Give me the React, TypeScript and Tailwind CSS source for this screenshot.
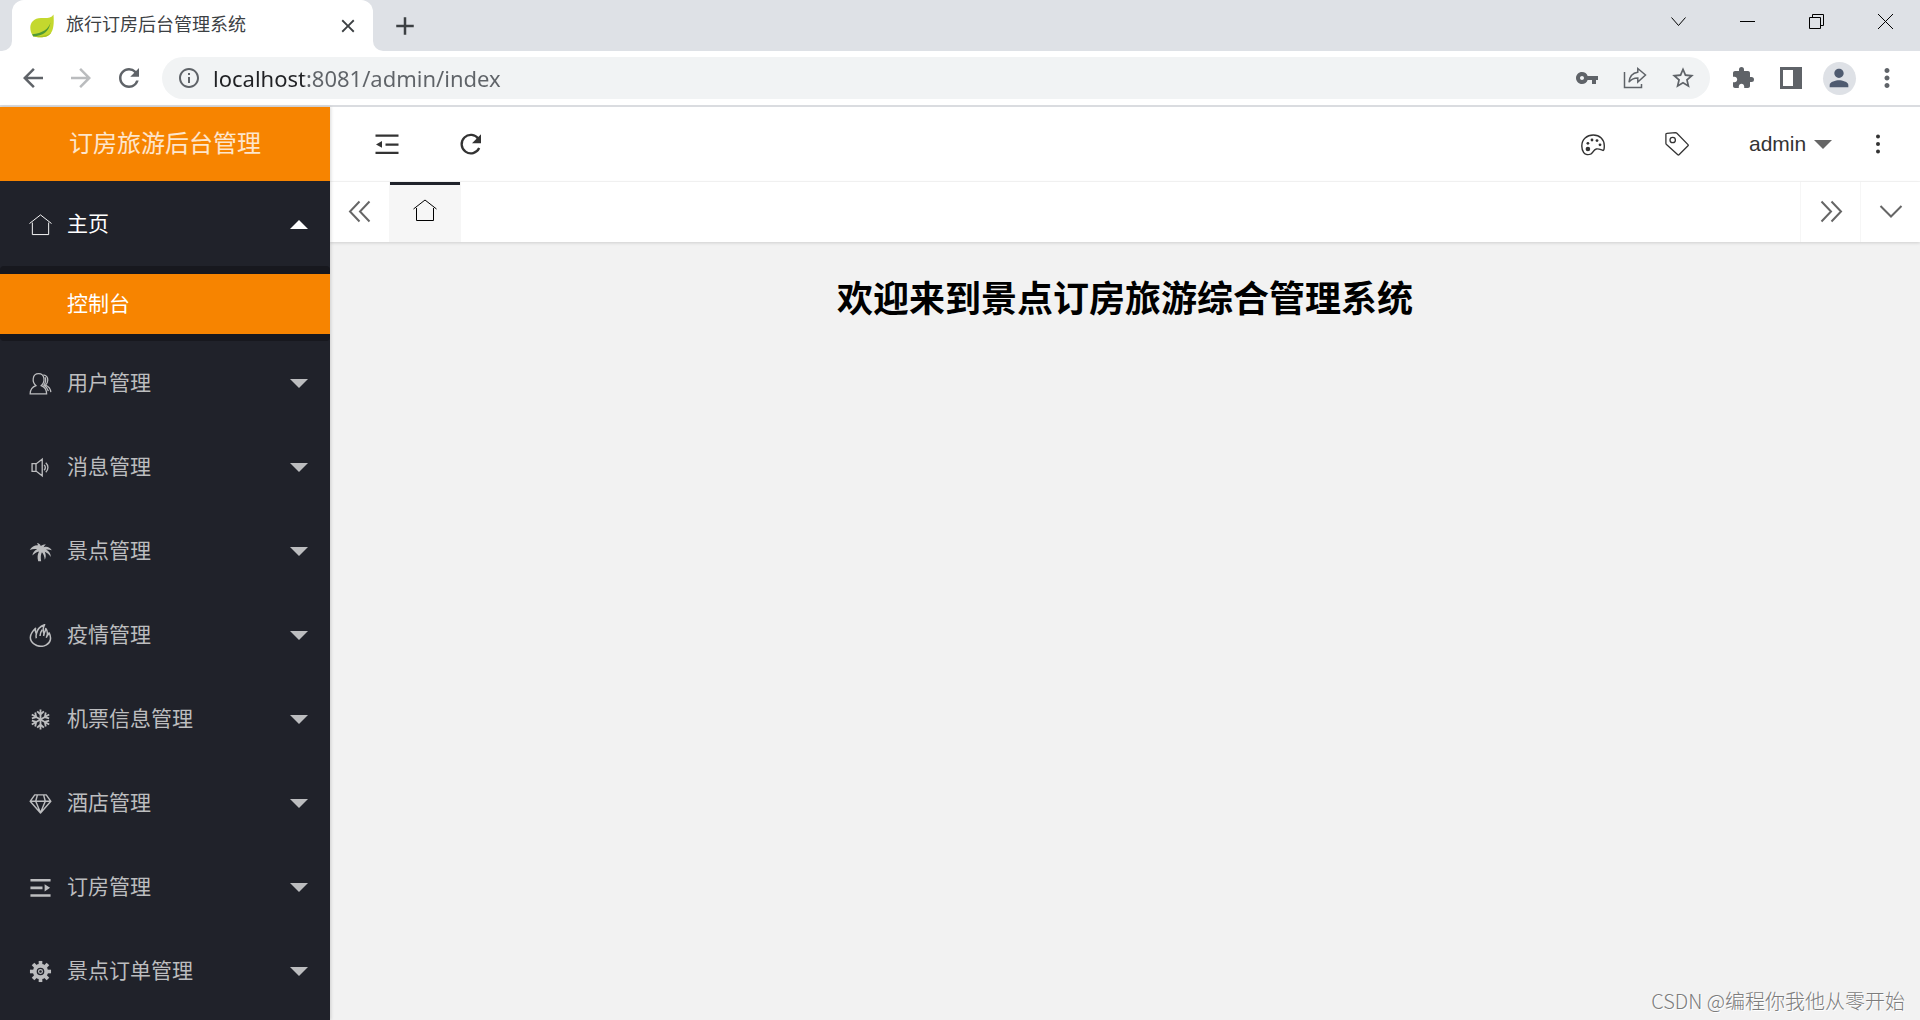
import React from 'react'
import {
  MdAdd,
  MdArrowBack,
  MdArrowForward,
  MdClose,
  MdExtension,
  MdInfoOutline,
  MdMoreVert,
  MdPerson,
  MdRefresh,
  MdStarBorder,
  MdVpnKey
} from 'react-icons/md'

type IconProps = { className?: string }

function HomeIcon({ className }: IconProps) {
  return (
    <svg viewBox="0 0 24 24" className={className} fill="none" stroke="currentColor">
      <path d="M.5 11 12 2l11.500 9M3.500 10v12.500h17V10" />
    </svg>
  )
}

function UserIcon({ className }: IconProps) {
  return (
    <svg viewBox="0 0 24 24" className={className} fill="none" stroke="currentColor" strokeWidth="1.300">
      <path d="M7.300 14.300c-2.100-2-3.300-4.300-2.900-7.300.4-3.200 2.700-5.200 5.600-5.200s5.200 2 5.600 5.200c.4 3-.8 5.300-2.900 7.300 3.800 1.400 5.600 4 5.700 8.500H1.200c.1-4.500 2.100-7.100 6.100-8.500Z" />
      <path d="M15 3c3 .5 4.700 2.700 4.600 5.700-.1 2-.9 3.500-2.300 4.900 3.400 1.600 5.200 3.900 5.500 7.400M16.800 5.500c1.200 3 .7 5.700-1.300 8.200 2.500 1.500 4 3.500 4.700 6.300" />
    </svg>
  )
}

function SpeakerIcon({ className }: IconProps) {
  return (
    <svg viewBox="0 0 24 24" className={className} fill="none" stroke="currentColor" strokeWidth="1.400">
      <path d="M3.200 8h4.500l6.100-4.700v17.400L7.700 16H3.200V8Zm4.100 0v8M15.800 9.300c1.500 1.700 1.500 3.900 0 5.500M17.500 7c3 2.800 3 7.200 0 10" />
    </svg>
  )
}

function PalmIcon({ className }: IconProps) {
  return (
    <svg viewBox="0 0 24 24" className={className} fill="currentColor">
      <path d="M12.300 6.300C11.800 4.600 10.300 3.400 8.200 3.200c.7.800 1 1.500 1.100 2.300C6 5.300 2.500 7 .8 10.500c2.500-1 5.200-1.200 7.700-.8-2.700 1.300-4.500 3.600-5 6.600 1.900-2.300 4.400-3.700 7-4.300-1.700 3-2 6-.9 10.200h3.100c-.8-4-.4-7 .8-9.300 1.700 2 2.700 4.700 2.900 7.800 1.500-2.200 1.400-5.300.1-8.400 2.500 1 4.600 2.900 6.200 5.500.1-3.200-1.500-6.200-4.900-7.800 2.100-.2 4 .1 6 .8-1.900-3.300-5.200-4.400-8.500-3.300.4-1.200 1.200-2.200 2.500-2.900-2.500-.1-4.600.5-5.500 1.700Z" />
    </svg>
  )
}

function FireIcon({ className }: IconProps) {
  return (
    <svg viewBox="0 0 24 24" className={className} fill="none" stroke="currentColor" strokeWidth="1.600" strokeLinejoin="round">
      <path d="M5.500 21C-.8 16.500.7 10.500 6.800 4.500 6.300 7 6.700 8.500 7.700 10.300 8.500 5.500 11 2.500 16.300.7c-2 3.300-2 6-.6 9.300.8-1.500 1.500-3 1.800-5.200 1.800 2 2 4.200 1.500 7.200 1-.6 1.500-1.500 2-2.700C23.700 14.500 22.700 19.500 17.700 22c-3.700 1.800-8.700 1.500-12.200-1Z" />
      <path d="M7.700 10.300c-.5 1.600-.6 2.900-.1 4.500M11.500 12.500c.2-2.600.9-4.700 2.300-6.500M15.700 10l-.5 2.500M19 12l-1 2.300" />
    </svg>
  )
}

function SnowIcon({ className }: IconProps) {
  return (
    <svg viewBox="0 0 24 24" className={className} fill="none" stroke="currentColor" strokeWidth="1.900">
      {[0, 60, 120, 180, 240, 300].map((angle) => (
        <path key={angle} d="M12 12V1.500M8.500 3.600l3.500 3.200 3.500-3.200" transform={`rotate(${angle} 12 12)`} />
      ))}
    </svg>
  )
}

function DiamondIcon({ className }: IconProps) {
  return (
    <svg viewBox="0 0 24 24" className={className} fill="none" stroke="currentColor" strokeWidth="1.500" strokeLinejoin="round">
      <path d="M6 3h12l4.800 6.700L12 22 1.200 9.700 6 3ZM1.200 9.700h21.600M8.700 3.200 7 9.700l5 12 5-12-1.700-6.500" />
    </svg>
  )
}

function SpreadIcon({ className }: IconProps) {
  return (
    <svg viewBox="0 0 24 24" className={className} fill="currentColor">
      <path d="M1.500 3h21v2.700h-21zM1.500 11h12.600v2.700H1.500zM1.500 19h21v2.700h-21zM16.300 8.500l5.700 3.800-5.700 3.800z" />
    </svg>
  )
}

function ShrinkIcon({ className }: IconProps) {
  return (
    <svg viewBox="0 0 24 24" className={className} fill="currentColor">
      <path d="M.5 2.500h23v2.300H.5zM10.500 11.500h13v2.200h-13zM.5 19.700h23V22H.5zM7 9v6.800L1 12.400z" />
    </svg>
  )
}

function GearIcon({ className }: IconProps) {
  return (
    <svg viewBox="0 0 24 24" className={className} fill="none" stroke="currentColor">
      <circle cx="12" cy="12" r="6" strokeWidth="4" />
      <circle cx="12" cy="12" r="2" strokeWidth="1.200" />
      {[0, 45, 90, 135, 180, 225, 270, 315].map((angle) => (
        <path key={angle} d="M12 5.500V1" strokeWidth="3.800" transform={`rotate(${angle} 12 12)`} />
      ))}
    </svg>
  )
}

function PaletteIcon({ className }: IconProps) {
  return (
    <svg viewBox="0 0 24 24" className={className} fill="none" stroke="currentColor" strokeWidth="1.400">
      <path d="M.8 14C.8 7.500 5.800 3 12.300 3S23.300 7.700 23.300 13.700c0 3.700-.5 4.900-1.500 4.700-2.200-.8-4.300-1.900-6.500-1.400-3.200.8-2.400 3.100-5.200 4.800-2.500 1.200-5.900 1-7.400-1.100C1.300 18.700.8 16.900.8 14Z" />
      <g fill="currentColor" stroke="none">
        <circle cx="6.900" cy="17" r="2.300" />
        <circle cx="6.900" cy="11.300" r="1.400" />
        <circle cx="11" cy="8" r="1.400" />
        <circle cx="16" cy="8.600" r="1.400" />
        <circle cx="19" cy="12.800" r="1.400" />
      </g>
    </svg>
  )
}

function TagIcon({ className }: IconProps) {
  return (
    <svg viewBox="0 0 24 24" className={className} fill="none" stroke="currentColor" strokeWidth="1.300" strokeLinejoin="round">
      <path d="M1.700 1.400 10.500.7c.6 0 1 .1 1.400.5L23 12.600c.4.400.4.800 0 1.200l-9 9c-.4.400-.8.400-1.200 0L1.500 12.500c-.4-.4-.6-.8-.6-1.300V2.200c0-.5.300-.8.800-.8Z" />
      <circle cx="7.700" cy="8" r="2.700" />
    </svg>
  )
}

function ReloadIcon({ className }: IconProps) {
  return (
    <svg viewBox="0 0 24 24" className={className} fill="none" stroke="currentColor" strokeWidth="2.300">
      <path d="M19.500 7a9.200 9.200 0 1 0 .7 9" />
      <path d="M22 2.200v9h-9z" fill="currentColor" stroke="none" />
    </svg>
  )
}

function ShareIcon({ className }: IconProps) {
  return (
    <svg viewBox="0 0 24 24" className={className} fill="none" stroke="currentColor" strokeWidth="1.500">
      <path d="M1.500 6v15.500h17V18" />
      <path d="M14.800 2.500 22.500 9l-7.700 7v-4c-4 0-6.800 1.200-8.800 4.200.5-5.500 3.800-9.300 8.800-10V2.500Z" />
    </svg>
  )
}

function SidePanelIcon({ className }: IconProps) {
  return (
    <svg viewBox="0 0 24 24" className={className} fill="currentColor" fillRule="evenodd">
      <path d="M1 1h22v22H1V1Zm3 3v16h10V4H4Z" />
    </svg>
  )
}

function DoubleChevron({ className }: IconProps) {
  return (
    <svg viewBox="0 0 24 24" className={className} fill="none" stroke="currentColor" strokeWidth="2">
      <path d="M11.500 1.500 2 11.500l9.500 10M21.500 1.500 12 11.500l9.500 10" />
    </svg>
  )
}

function LeafIcon({ className }: IconProps) {
  return (
    <svg viewBox="0 0 24 24" className={className}>
      <path d="M23.500.5C21 4.500 17 4 11 4 4 4 .3 8.500.3 13.500c0 3 .9 6 2.700 8.500 3.500 1.600 10 1.800 14 .2 6.500-2.700 7.300-11.200 6.500-21.700Z" fill="#c4d82e" />
      <path d="M3 22c3.500 1.600 10 1.800 14 .2 1.800-.8 3.200-2 4.200-3.600-4 3.400-11 3.900-18.200 3.400Z" fill="#a9c223" />
      <path d="M20.500 8.500C18.500 15.500 12.500 19 2.200 20.300l1 2.100C13 22 19 17.500 20.500 8.500Z" fill="#4f9a35" />
    </svg>
  )
}

const menuItems = [
  { icon: UserIcon, title: '用户管理' },
  { icon: SpeakerIcon, title: '消息管理' },
  { icon: PalmIcon, title: '景点管理' },
  { icon: FireIcon, title: '疫情管理' },
  { icon: SnowIcon, title: '机票信息管理' },
  { icon: DiamondIcon, title: '酒店管理' },
  { icon: SpreadIcon, title: '订房管理' },
  { icon: GearIcon, title: '景点订单管理' }
]

const toolbarButton = 'flex h-12 w-12 shrink-0 items-center justify-center'
const windowButton = 'flex h-[43px] w-[69px] items-center justify-center'
const headerButton = 'flex h-full w-[84px] items-center justify-center'
const menuButton = 'flex h-[84px] w-full items-center pl-[29px] pr-[22px] text-left'

function TabStrip() {
  return (
    <div className="flex h-[51px] bg-white">
      <div className="w-3 rounded-br-[10px] bg-[#dee1e6]" />
      <div className="bg-[#dee1e6]">
        <div className="flex h-full w-[361px] items-center rounded-t-[12px] bg-white pl-[18px] pr-[14px]">
          <LeafIcon className="h-6 w-6" />
          <span className="ml-3 flex-1 text-[18px] text-[#3c4043]">旅行订房后台管理系统</span>
          <button aria-label="关闭标签页" className="text-[#3c4043]">
            <MdClose size={22} />
          </button>
        </div>
      </div>
      <div className="flex flex-1 rounded-bl-[10px] bg-[#dee1e6]">
        <button aria-label="新标签页" className="ml-[17px] text-[#3c4043]">
          <MdAdd size={30} />
        </button>
        <div className="ml-auto flex text-black">
          <button aria-label="搜索标签页" className={windowButton}>
            <svg viewBox="0 0 15 15" className="h-[15px] w-[15px]" fill="none" stroke="currentColor"><path d="m.5 3.500 7 8 7-8" /></svg>
          </button>
          <button aria-label="最小化" className={windowButton}>
            <svg viewBox="0 0 15 15" className="h-[15px] w-[15px]" fill="none" stroke="currentColor"><path d="M0 7.500h15" /></svg>
          </button>
          <button aria-label="还原" className={windowButton}>
            <svg viewBox="0 0 15 15" className="h-[15px] w-[15px]" fill="none" stroke="currentColor"><path d="M.5 3.500h11v11H.5zM3.500 3.500v-3h11v11h-3" /></svg>
          </button>
          <button aria-label="关闭" className={windowButton}>
            <svg viewBox="0 0 15 15" className="h-[15px] w-[15px]" fill="none" stroke="currentColor"><path d="m0 0 15 15M15 0 0 15" /></svg>
          </button>
        </div>
      </div>
    </div>
  )
}

function Toolbar() {
  return (
    <div className="flex h-14 items-center border-b-2 border-[#dadce0] bg-white px-[9px] text-[#5f6368]">
      <button aria-label="后退" className={toolbarButton}><MdArrowBack size={30} /></button>
      <button aria-label="前进" className={`${toolbarButton} text-[#babcbe]`}><MdArrowForward size={30} /></button>
      <button aria-label="重新加载" className={toolbarButton}><MdRefresh size={30} /></button>
      <div className="mx-[9px] flex h-[42px] flex-1 items-center rounded-full bg-[#f1f3f4] px-[3px]">
        <button aria-label="网站信息" className={toolbarButton}><MdInfoOutline size={24} /></button>
        <input
          aria-label="地址"
          defaultValue="localhost:8081/admin/index"
          className="h-full min-w-0 flex-1 bg-[linear-gradient(to_right,#202124_91px,#5f6368_91px)] bg-clip-text font-['Noto_Sans',sans-serif] text-[22px] text-transparent caret-black outline-none"
        />
        <button aria-label="密码" className={toolbarButton}><MdVpnKey size={24} /></button>
        <button aria-label="分享" className={toolbarButton}><ShareIcon className="h-6 w-6" /></button>
        <button aria-label="收藏" className={toolbarButton}><MdStarBorder size={26} /></button>
      </div>
      <button aria-label="扩展程序" className={toolbarButton}><MdExtension size={24} /></button>
      <button aria-label="侧边栏" className={toolbarButton}><SidePanelIcon className="h-6 w-6" /></button>
      <button aria-label="用户" className={toolbarButton}>
        <span className="flex h-[33px] w-[33px] items-center justify-center rounded-full bg-[#dee1e6] text-[#4f5b70]">
          <MdPerson size={28} />
        </span>
      </button>
      <button aria-label="更多" className={toolbarButton}><MdMoreVert size={30} /></button>
    </div>
  )
}

function Sidebar() {
  return (
    <aside className="z-10 w-[330px] shrink-0 bg-[#20222a] shadow-[1px_0_3px_rgba(0,0,0,0.15)]">
      <div className="flex h-[74px] items-center justify-center bg-[#f78400] text-[24px] text-white/80">
        订房旅游后台管理
      </div>
      <nav className="pt-px text-[21px]">
        <button className={`${menuButton} text-white`}>
          <HomeIcon className="h-[23px] w-[23px]" />
          <span className="ml-[15px] flex-1">主页</span>
          <span className="border-x-[9px] border-b-[9px] border-x-transparent border-b-white" />
        </button>
        <div className="rounded-sm bg-[#17181e] pb-[7px] pt-2">
          <a href="#console" className="flex h-[60px] items-center bg-[#f78400] pl-[67px] text-white">控制台</a>
        </div>
        {menuItems.map((item) => {
          const Icon = item.icon
          return (
            <button key={item.title} className={`${menuButton} text-[#bcbdbf]`}>
              <Icon className="h-[23px] w-[23px]" />
              <span className="ml-[15px] flex-1">{item.title}</span>
              <span className="border-x-[9px] border-t-[9px] border-x-transparent border-t-[#bcbdbf]" />
            </button>
          )
        })}
      </nav>
    </aside>
  )
}

export default function App() {
  return (
    <div className="flex min-h-screen flex-col font-['Liberation_Sans','Noto_Sans_CJK_SC',sans-serif]">
      <TabStrip />
      <Toolbar />
      <div className="flex flex-1">
        <Sidebar />
        <div className="flex flex-1 flex-col bg-[#f2f2f2]">
          <header className="flex h-[75px] items-center border-b border-[#f6f6f6] bg-white pl-[15px] text-[#333]">
            <button aria-label="侧边伸缩" className={headerButton}><ShrinkIcon className="h-6 w-6" /></button>
            <button aria-label="刷新" className={headerButton}><ReloadIcon className="h-6 w-6" /></button>
            <button aria-label="主题" className={`${headerButton} ml-auto`}><PaletteIcon className="h-6 w-6" /></button>
            <button aria-label="便签" className={headerButton}><TagIcon className="h-6 w-6" /></button>
            <button className="flex h-full w-[117px] items-center pl-[30px] text-[21px]">
              admin
              <span className="ml-2 border-x-[9px] border-t-[9px] border-x-transparent border-t-[#666]" />
            </button>
            <button aria-label="更多选项" className={headerButton}>
              <svg viewBox="0 0 24 24" className="h-6 w-6" fill="currentColor">
                <circle cx="12" cy="4.500" r="2" />
                <circle cx="12" cy="12" r="2" />
                <circle cx="12" cy="19.500" r="2" />
              </svg>
            </button>
          </header>
          <div className="flex h-[60px] bg-white text-[#666] shadow-[0_1px_3px_rgba(0,0,0,0.15)]">
            <button aria-label="向左滚动" className="flex w-[59px] items-center justify-center">
              <DoubleChevron className="h-6 w-6" />
            </button>
            <button aria-label="主页标签" className="flex w-[72px] flex-col items-center bg-[#f6f6f6] text-black">
              <span className="h-[3px] w-[70px] bg-[#20222a]" />
              <HomeIcon className="mt-[13px] h-6 w-6" />
            </button>
            <button aria-label="向右滚动" className="ml-auto flex w-[60px] items-center justify-center border-l border-[#f6f6f6]">
              <DoubleChevron className="h-6 w-6 -scale-x-100" />
            </button>
            <button aria-label="标签操作" className="flex w-[60px] items-center justify-center border-l border-[#f6f6f6]">
              <svg viewBox="0 0 24 24" className="h-6 w-6" fill="none" stroke="currentColor" strokeWidth="2"><path d="M1.500 6 12 16.500 22.500 6" /></svg>
            </button>
          </div>
          <main className="flex flex-1 flex-col">
            <h1 className="pt-8 text-center text-[36px] font-bold leading-[52px] text-black">欢迎来到景点订房旅游综合管理系统</h1>
            <p className="mt-auto pb-1 pr-[15px] text-right font-['Noto_Sans_CJK_SC',sans-serif] text-[20px] font-light text-[#7c7c7c] [text-shadow:1px_1px_0_#fff]">
              CSDN @编程你我他从零开始
            </p>
          </main>
        </div>
      </div>
    </div>
  )
}
